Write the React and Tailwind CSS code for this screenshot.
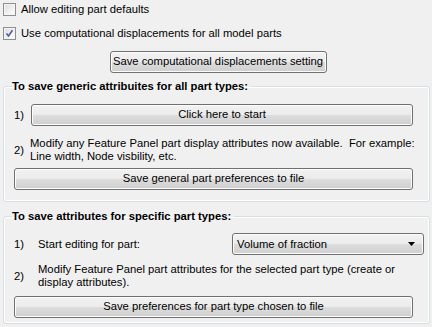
import React from "react";

const btn =
  "flex items-center justify-center h-[22px] border border-[#707070] rounded-[3px] bg-[linear-gradient(to_bottom,#f2f2f2_0%,#ebebeb_50%,#dddddd_50%,#cfcfcf_100%)] shadow-[inset_0_0_0_1px_#fcfcfc] text-[11.25px] leading-none text-black whitespace-nowrap";

function Check({ checked }) {
  return (
    <div className="relative w-[13px] h-[13px] border border-[#8e8f8f] bg-[linear-gradient(135deg,#dcdcdc_0%,#f6f6f6_70%,#ffffff_100%)] shadow-[inset_0_0_0_1px_#f4f4f4] shrink-0">
      {checked && (
        <svg className="absolute left-[1px] top-[1px]" width="9" height="9" viewBox="0 0 9 9">
          <path d="M1.5 4.5 L3.5 7 L7.5 1.2" fill="none" stroke="#4a60a0" strokeWidth="1.6" />
        </svg>
      )}
    </div>
  );
}

export default function App() {
  return (
    <div className="w-[432px] h-[327px] overflow-hidden bg-[#f0f0f0] font-['Liberation_Sans',Arial,sans-serif] text-[11.25px] leading-[13px] text-black pt-[3px] whitespace-nowrap">
      <div className="flex items-center gap-[5px] pl-[3px] h-[13px]">
        <Check />
        <span>Allow editing part defaults</span>
      </div>
      <div className="flex items-center gap-[5px] pl-[3px] h-[13px] mt-[11px]">
        <Check checked />
        <span>Use computational displacements for all model parts</span>
      </div>
      <div className="flex justify-center mt-[11px] pl-[4px]">
        <div className={btn + " w-[217px]"}>Save computational displacements setting</div>
      </div>

      <fieldset className="mt-[7px] ml-[3px] mr-[2px] border border-[#d5dfe5] rounded-[3px] shadow-[inset_0_0_0_1px_#ffffff] pl-[10px] pr-[16px] pb-[11px] min-w-0">
        <legend className="-ml-[2px] pr-[3px] font-bold leading-[13px]">
          To save generic attribuites for all part types:
        </legend>
        <div className="flex items-center mt-[11px]">
          <span className="w-[17px]">1)</span>
          <div className={btn + " flex-1"}>Click here to start</div>
        </div>
        <div className="flex items-center mt-[11px]">
          <span className="w-[16px] shrink-0">2)</span>
          <div className="whitespace-nowrap">
            <div>Modify any Feature Panel part display attributes now available.&nbsp; For example:</div>
            <div>Line width, Node visbility, etc.</div>
          </div>
        </div>
        <div className={btn + " mt-[5px]"}>Save general part preferences to file</div>
      </fieldset>

      <fieldset className="mt-[8px] ml-[3px] mr-[2px] border border-[#d5dfe5] rounded-[3px] shadow-[inset_0_0_0_1px_#ffffff] pl-[10px] pr-[16px] pb-[5px] min-w-0">
        <legend className="-ml-[2px] pr-[3px] font-bold leading-[13px]">
          To save attributes for specific part types:
        </legend>
        <div className="flex items-center mt-[10px] -mr-[11px]">
          <span className="w-[24px]">1)</span>
          <span className="flex-1">Start editing for part:</span>
          <div className="flex items-center justify-between w-[192px] h-[22px] border border-[#707070] rounded-[3px] bg-[linear-gradient(to_bottom,#f2f2f2_0%,#ebebeb_50%,#dddddd_50%,#cfcfcf_100%)] shadow-[inset_0_0_0_1px_#fcfcfc] pl-[4px] pr-[8px]">
            <span>Volume of fraction</span>
            <svg width="7" height="4" viewBox="0 0 7 4">
              <path d="M0 0 H7 L3.5 4 Z" fill="#000" />
            </svg>
          </div>
        </div>
        <div className="flex items-center mt-[8px]">
          <span className="w-[24px] shrink-0">2)</span>
          <div className="whitespace-nowrap">
            <div>Modify Feature Panel part attributes for the selected part type (create or</div>
            <div>display attributes).</div>
          </div>
        </div>
        <div className={btn + " mt-[7px]"}>Save preferences for part type chosen to file</div>
      </fieldset>
    </div>
  );
}
